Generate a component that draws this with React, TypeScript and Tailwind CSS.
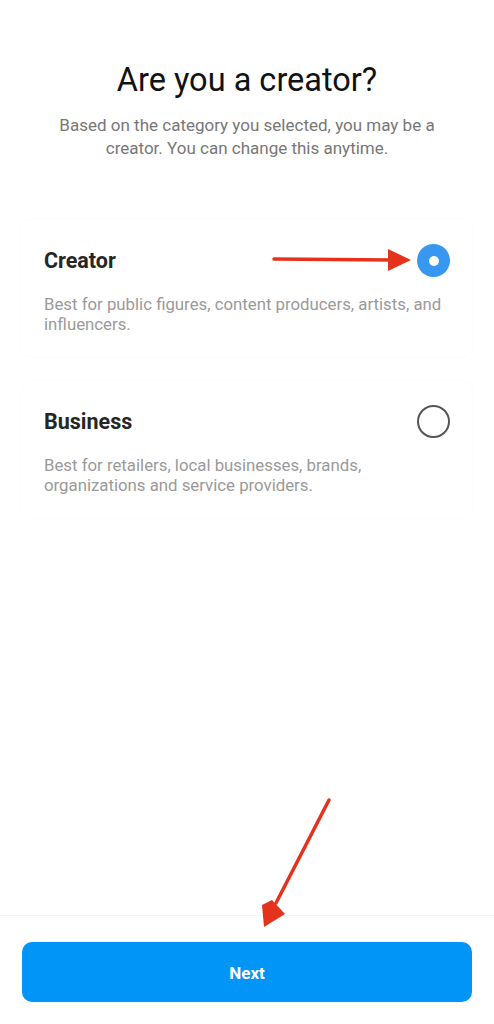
import React from "react";

interface AccountType {
  id: string;
  title: string;
  description: string;
}

const types: AccountType[] = [
  {
    id: "creator",
    title: "Creator",
    description: "Best for public figures, content producers, artists, and influencers.",
  },
  {
    id: "business",
    title: "Business",
    description: "Best for retailers, local businesses, brands, organizations and service providers.",
  },
];

function Radio({ checked }: { checked: boolean }) {
  if (checked) {
    return (
      <div className="flex h-[33px] w-[33px] items-center justify-center rounded-full bg-[#3897f0]">
        <div className="h-[10px] w-[10px] rounded-full bg-white" />
      </div>
    );
  }
  return <div className="h-[33px] w-[33px] rounded-full border-2 border-[#555555]" />;
}

export default function App() {
  const selected = "creator";

  return (
    <div className="relative flex h-[1024px] w-full flex-col bg-white font-['Roboto','Liberation_Sans',sans-serif]">
      {/* header */}
      <div className="px-[30px] pt-[61px] text-center">
        <h1 className="text-[32.5px] leading-[38px] text-[#111111]">Are you a creator?</h1>
        <p className="mx-auto mt-[15px] max-w-[420px] text-[17px] leading-[23px] text-[#777777]">
          Based on the category you selected, you may be a creator. You can change this anytime.
        </p>
      </div>

      {/* options */}
      <div className="mx-[22px] mt-[60px] flex flex-col gap-[25px]">
        {types.map((t) => (
          <div
            key={t.id}
            className="rounded-[10px] pb-[22px] pl-[22px] pr-[20px] pt-[24px] shadow-[0_0_6px_rgba(0,0,0,0.025)]"
          >
            <div className="flex items-center justify-between pr-[2px]">
              <h3 className="text-[21.5px] font-bold leading-[28px] text-[#262626]">{t.title}</h3>
              <Radio checked={t.id === selected} />
            </div>
            <p className="mt-[17px] text-[16.8px] leading-[20px] text-[#9a9a9a]">{t.description}</p>
          </div>
        ))}
      </div>

      {/* footer */}
      <div className="mt-auto border-t border-[#f3f3f3] px-[22px] pb-[22px] pt-[26px]">
        <button className="h-[60px] w-full rounded-[10px] bg-[#0095f6] pt-[3px] text-[17px] font-bold text-white">
          Next
        </button>
      </div>

      {/* annotation arrows */}
      <svg className="pointer-events-none absolute left-0 top-0" width="494" height="1024">
        <line x1="274" y1="259" x2="392" y2="260" stroke="#e4321c" strokeWidth="3.5" strokeLinecap="round" />
        <polygon points="388,249 411,260 388,271" fill="#e4321c" />
        <line x1="329" y1="800" x2="276" y2="903" stroke="#e4321c" strokeWidth="3.5" strokeLinecap="round" />
        <polygon points="262,905 264,927 285,914 272,900" fill="#e4321c" />
      </svg>
    </div>
  );
}
